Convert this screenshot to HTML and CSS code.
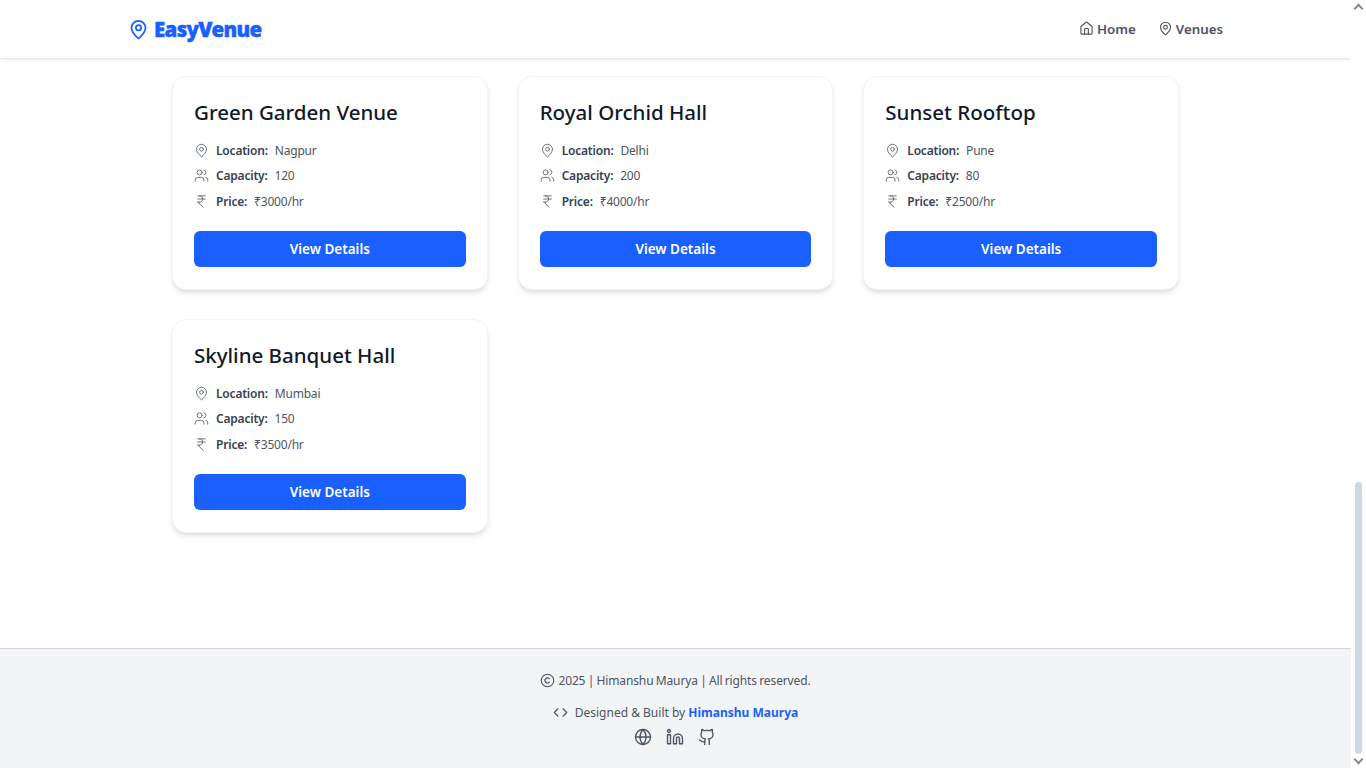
FILE: index.html
```html
<!DOCTYPE html>
<html lang="en">
<head>
  <meta charset="UTF-8">
  <meta name="viewport" content="width=device-width, initial-scale=1.0">
  <title>EasyVenue</title>
  <link rel="stylesheet" href="styles.css">
</head>
<body>
  <svg class="sprites" aria-hidden="true">
    <symbol id="i-pin" viewBox="0 0 24 24"><path d="M20 10c0 4.993-5.539 10.193-7.399 11.799a1 1 0 0 1-1.202 0C9.539 20.193 4 14.993 4 10a8 8 0 0 1 16 0"/><circle cx="12" cy="10" r="3"/></symbol>
    <symbol id="i-home" viewBox="0 0 24 24"><path d="M15 21v-8a1 1 0 0 0-1-1h-4a1 1 0 0 0-1 1v8"/><path d="M3 10a2 2 0 0 1 .709-1.528l7-5.999a2 2 0 0 1 2.582 0l7 5.999A2 2 0 0 1 21 10v9a2 2 0 0 1-2 2H5a2 2 0 0 1-2-2z"/></symbol>
    <symbol id="i-users" viewBox="0 0 24 24"><path d="M16 21v-2a4 4 0 0 0-4-4H6a4 4 0 0 0-4 4v2"/><circle cx="9" cy="7" r="4"/><path d="M22 21v-2a4 4 0 0 0-3-3.87"/><path d="M16 3.13a4 4 0 0 1 0 7.75"/></symbol>
    <symbol id="i-rupee" viewBox="0 0 24 24"><path d="M6 3h12"/><path d="M6 8h12"/><path d="m6 13 8.5 8"/><path d="M6 13h3"/><path d="M9 13c6.667 0 6.667-10 0-10"/></symbol>
    <symbol id="i-copyright" viewBox="0 0 24 24"><circle cx="12" cy="12" r="10"/><path d="M14.83 14.83a4 4 0 1 1 0-5.66"/></symbol>
    <symbol id="i-code" viewBox="0 0 24 24"><path d="m16 18 6-6-6-6"/><path d="m8 6-6 6 6 6"/></symbol>
    <symbol id="i-globe" viewBox="0 0 24 24"><circle cx="12" cy="12" r="10"/><path d="M12 2a14.5 14.5 0 0 0 0 20 14.5 14.5 0 0 0 0-20"/><path d="M2 12h20"/></symbol>
    <symbol id="i-linkedin" viewBox="0 0 24 24"><path d="M16 8a6 6 0 0 1 6 6v7h-4v-7a2 2 0 0 0-2-2 2 2 0 0 0-2 2v7h-4v-7a6 6 0 0 1 6-6z"/><rect x="2" y="9" width="4" height="12"/><circle cx="4" cy="4" r="2"/></symbol>
    <symbol id="i-github" viewBox="0 0 24 24"><path d="M15 22v-4a4.8 4.8 0 0 0-1-3.5c3 0 6-2 6-5.5.08-1.25-.27-2.48-1-3.5.28-1.15.28-2.35 0-3.5 0 0-1 0-3 1.5-2.64-.5-5.36-.5-8 0C6 2 5 2 5 2c-.3 1.15-.3 2.35 0 3.5A5.403 5.403 0 0 0 4 9c0 3.5 3 5.5 6 5.5-.39.49-.68 1.05-.85 1.65-.17.6-.22 1.23-.15 1.85v4"/><path d="M9 18c-4.51 2-5-2-7-2"/></symbol>
  </svg>

  <div class="page">
    <header class="navbar">
      <a class="brand" href="#">
        <svg class="icon brand-icon"><use href="#i-pin"/></svg>
        <span>EasyVenue</span>
      </a>
      <nav class="nav-links">
        <a href="#"><svg class="icon"><use href="#i-home"/></svg>Home</a>
        <a href="#"><svg class="icon"><use href="#i-pin"/></svg>Venues</a>
      </nav>
    </header>

    <main class="venues">
      <article class="card">
        <h3>Green Garden Venue</h3>
        <p class="row"><svg class="icon"><use href="#i-pin"/></svg><b>Location:</b> Nagpur</p>
        <p class="row"><svg class="icon"><use href="#i-users"/></svg><b>Capacity:</b> 120</p>
        <p class="row"><svg class="icon"><use href="#i-rupee"/></svg><b>Price:</b> ₹3000/hr</p>
        <button type="button">View Details</button>
      </article>
      <article class="card">
        <h3>Royal Orchid Hall</h3>
        <p class="row"><svg class="icon"><use href="#i-pin"/></svg><b>Location:</b> Delhi</p>
        <p class="row"><svg class="icon"><use href="#i-users"/></svg><b>Capacity:</b> 200</p>
        <p class="row"><svg class="icon"><use href="#i-rupee"/></svg><b>Price:</b> ₹4000/hr</p>
        <button type="button">View Details</button>
      </article>
      <article class="card">
        <h3>Sunset Rooftop</h3>
        <p class="row"><svg class="icon"><use href="#i-pin"/></svg><b>Location:</b> Pune</p>
        <p class="row"><svg class="icon"><use href="#i-users"/></svg><b>Capacity:</b> 80</p>
        <p class="row"><svg class="icon"><use href="#i-rupee"/></svg><b>Price:</b> ₹2500/hr</p>
        <button type="button">View Details</button>
      </article>
      <article class="card">
        <h3>Skyline Banquet Hall</h3>
        <p class="row"><svg class="icon"><use href="#i-pin"/></svg><b>Location:</b> Mumbai</p>
        <p class="row"><svg class="icon"><use href="#i-users"/></svg><b>Capacity:</b> 150</p>
        <p class="row"><svg class="icon"><use href="#i-rupee"/></svg><b>Price:</b> ₹3500/hr</p>
        <button type="button">View Details</button>
      </article>
    </main>

    <footer class="footer">
      <p class="copy"><svg class="icon"><use href="#i-copyright"/></svg>2025 | Himanshu Maurya | All rights reserved.</p>
      <p class="built"><svg class="icon"><use href="#i-code"/></svg>Designed &amp; Built by <a href="#">Himanshu Maurya</a></p>
      <div class="socials">
        <a href="#"><svg class="icon"><use href="#i-globe"/></svg></a>
        <a href="#"><svg class="icon"><use href="#i-linkedin"/></svg></a>
        <a href="#"><svg class="icon"><use href="#i-github"/></svg></a>
      </div>
    </footer>
  </div>

  <div class="scrollbar">
    <span class="arrow up"></span>
    <div class="track"><div class="thumb"></div></div>
    <span class="arrow down"></span>
  </div>
</body>
</html>
```

FILE: styles.css
```css
/* Reset and global styles */
* {
  margin: 0;
  padding: 0;
  box-sizing: border-box;
}
html, body {
  height: 768px;
  overflow: hidden;
}
body {
  display: flex;
  font-family: 'Noto Sans', sans-serif;
  background: #fff;
  color: #374151;
}
a {
  color: inherit;
  text-decoration: none;
}
.sprites {
  display: none;
}
.icon {
  width: 16px;
  height: 16px;
  fill: none;
  stroke: currentColor;
  stroke-width: 2;
  stroke-linecap: round;
  stroke-linejoin: round;
  flex-shrink: 0;
}
.page {
  width: 1351px;
  display: flex;
  flex-direction: column;
}

/* Navbar */
.navbar {
  height: 58px;
  padding: 0 128px;
  display: flex;
  justify-content: space-between;
  align-items: center;
  background: #fff;
  box-shadow: 0 1px 3px rgba(0, 0, 0, 0.14);
}
.brand {
  display: flex;
  align-items: center;
  gap: 5px;
  color: #1a5fff;
  font-size: 20.5px;
  font-weight: 900;
  letter-spacing: -0.7px;
  -webkit-text-stroke: 0.4px #1a5fff;
}
.brand-icon {
  width: 21px;
  height: 21px;
}
.nav-links {
  display: flex;
  gap: 22px;
  padding-bottom: 1px;
}
.nav-links a {
  display: flex;
  align-items: center;
  gap: 3px;
  font-size: 13.3px;
  font-weight: 600;
  color: #4b5563;
}
.nav-links .icon {
  width: 15px;
  height: 15px;
  stroke-width: 1.8;
}

/* Cards */
.venues {
  height: 590px;
  width: 1007px;
  margin-left: 172px;
  padding-top: 18px;
  display: grid;
  grid-template-columns: repeat(3, 315.67px);
  grid-auto-rows: 214px;
  column-gap: 30px;
  row-gap: 29px;
  align-content: start;
}
.card {
  padding: 21px 21px 22px;
  background: #fff;
  border: 1px solid #f3f4f6;
  border-radius: 14px;
  box-shadow: 0 4px 6px -1px rgba(0, 0, 0, 0.1), 0 2px 4px -2px rgba(0, 0, 0, 0.1);
  display: flex;
  flex-direction: column;
}
.card h3 {
  font-size: 20.5px;
  line-height: 28px;
  font-weight: 500;
  color: #111827;
  margin-bottom: 11.7px;
}
.row {
  display: flex;
  align-items: center;
  height: 25.5px;
  font-size: 12px;
  letter-spacing: -0.2px;
  color: #4b5563;
  white-space: pre;
}
.row .icon {
  width: 15px;
  height: 15px;
  margin-right: 7px;
  color: #6b7280;
  stroke-width: 1.6;
}
.row b {
  font-weight: 600;
  color: #374151;
  margin-right: 4px;
}
.card button {
  margin-top: auto;
  height: 36px;
  width: 100%;
  background: #1a5fff;
  color: #fff;
  border: none;
  border-radius: 6px;
  font-family: inherit;
  font-size: 13.5px;
  font-weight: 600;
}

/* Footer */
.footer {
  height: 120px;
  background: #f3f4f6;
  border-top: 1px solid #d1d5db;
  padding-top: 23px;
  display: flex;
  flex-direction: column;
  align-items: center;
  font-size: 12px;
  color: #4b5563;
}
.footer p {
  display: flex;
  align-items: center;
  white-space: pre;
}
.copy {
  letter-spacing: -0.12px;
  word-spacing: -0.7px;
}
.copy .icon {
  width: 15px;
  height: 15px;
  margin-right: 3px;
  stroke-width: 1.8;
}
.built {
  margin-top: 15px;
}
.built .icon {
  width: 15px;
  height: 15px;
  margin-right: 7px;
  stroke-width: 1.8;
}
.built a {
  color: #1a5fff;
  font-weight: 700;
}
.socials {
  display: flex;
  gap: 14px;
  margin-top: 7px;
  padding-right: 1px;
  color: #4b5563;
}
.socials .icon {
  width: 18px;
  height: 18px;
  display: block;
  stroke-width: 1.8;
}

/* Fake browser scrollbar, the shot is taken scrolled down */
.scrollbar {
  width: 15px;
  height: 768px;
  background: #fff;
  display: flex;
  flex-direction: column;
  align-items: center;
}
.track {
  flex: 1;
  width: 7px;
  position: relative;
}
.thumb {
  position: absolute;
  left: 0;
  top: 468px;
  bottom: 0;
  width: 7px;
  background: #cfd9e3;
  border-radius: 4px;
}
.arrow {
  height: 14px;
  width: 15px;
  display: flex;
  align-items: center;
  justify-content: center;
}
.arrow::before {
  content: "";
  width: 5px;
  height: 5px;
  border-left: 2px solid #8a8a8a;
  border-top: 2px solid #8a8a8a;
  transform: rotate(45deg);
  margin-top: 3px;
}
.arrow.down::before {
  transform: rotate(225deg);
  margin-top: -3px;
}
```
